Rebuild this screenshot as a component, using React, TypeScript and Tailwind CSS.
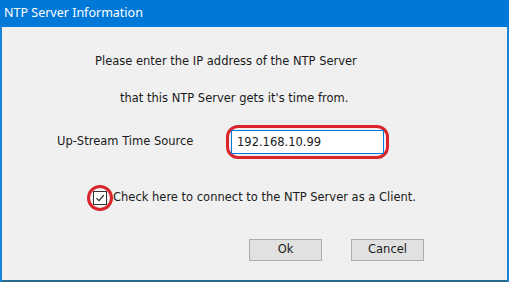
export default function App() {
  return (
    <div className="flex h-[282px] w-[509px] flex-col bg-[#1883d7] font-['DejaVu_Sans',sans-serif] text-[11.5px] text-[#1a1a1a]">
      <div className="flex h-[27px] shrink-0 items-center bg-[#0078d7] px-[4px] font-['Noto_Sans',sans-serif] text-[12.5px] text-white">
        NTP Server Information
      </div>
      <div className="mx-[2px] flex flex-1 flex-col border-b-2 border-[#2a6a8c] bg-[#f0f0f0]">
        <p className="mt-[26px] whitespace-nowrap pl-[93px] leading-[16px]">
          Please enter the IP address of the NTP Server
        </p>
        <p className="mt-[21px] whitespace-nowrap pl-[118px] leading-[16px]">
          that this NTP Server gets it's time from.
        </p>
        <div className="mt-[19px] flex items-center">
          <span className="w-[224px] whitespace-nowrap pl-[55px]">Up-Stream Time Source</span>
          <div className="rounded-[12px] border-[3px] border-[#d9252c] px-[2px] py-[2px]">
            <div className="flex h-[24px] w-[153px] items-center border border-[#0078d7] bg-white px-[5px] pt-[2px]">
              192.168.10.99
            </div>
          </div>
        </div>
        <div className="mt-[26px] flex items-center pl-[85px]">
          <div className="flex h-[26px] w-[26px] items-center justify-center rounded-full border-[3px] border-[#d9252c]">
            <div className="flex h-[14px] w-[14px] items-center justify-center border border-[#333] bg-white">
              <svg width="10" height="10" viewBox="0 0 10 10">
                <path d="M1.5 5.2 L4 7.6 L8.7 2.2" fill="none" stroke="#333" strokeWidth="1.3" />
              </svg>
            </div>
          </div>
          <span className="whitespace-nowrap">Check here to connect to the NTP Server as a Client.</span>
        </div>
        <div className="mt-[28px] flex gap-[29px] pl-[247px]">
          <button className="h-[22px] w-[73px] border border-[#adadad] bg-[#e1e1e1] font-['DejaVu_Sans',sans-serif] text-[11.5px] text-[#1a1a1a]">
            Ok
          </button>
          <button className="h-[22px] w-[73px] border border-[#adadad] bg-[#e1e1e1] font-['DejaVu_Sans',sans-serif] text-[11.5px] text-[#1a1a1a]">
            Cancel
          </button>
        </div>
      </div>
    </div>
  );
}
